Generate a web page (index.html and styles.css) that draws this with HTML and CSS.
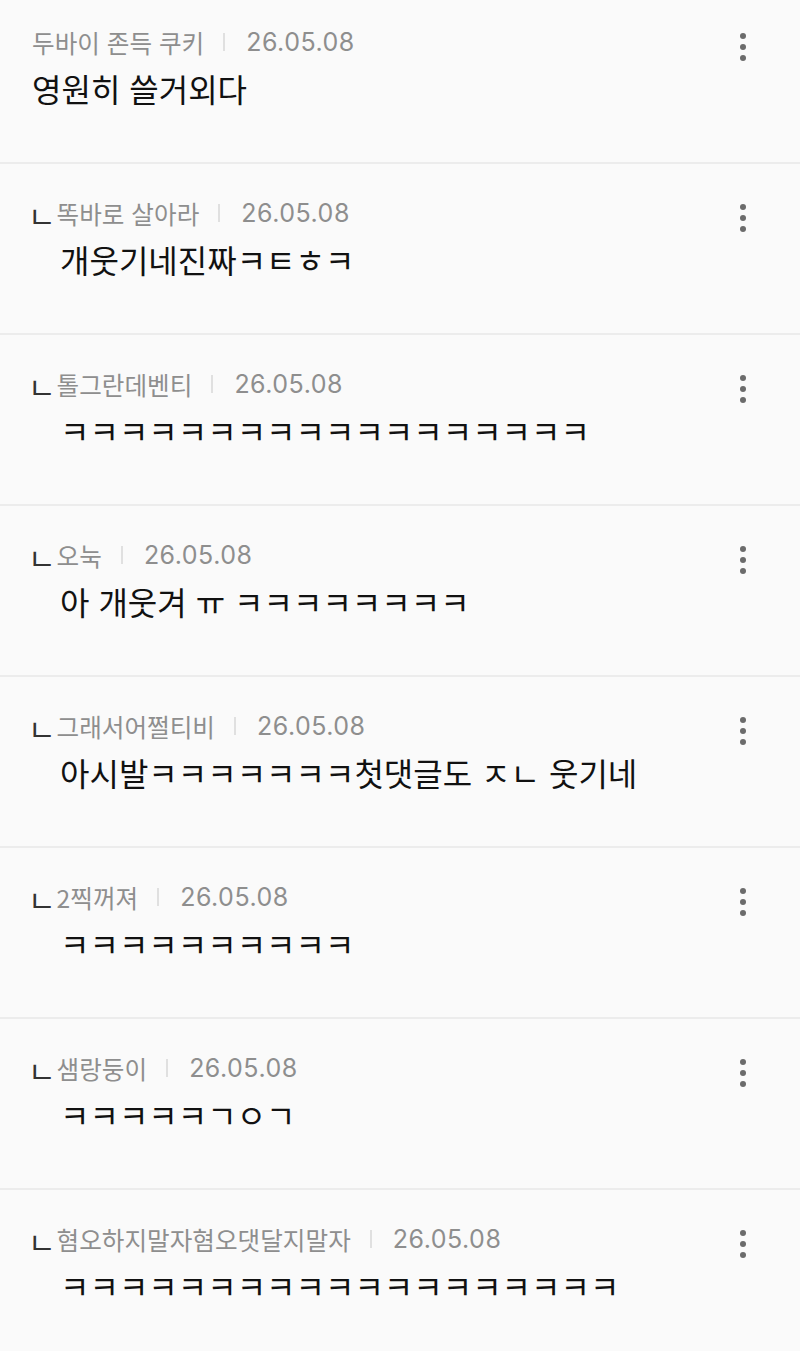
FILE: index.html
```html
<!DOCTYPE html>
<html lang="ko">
<head>
    <meta charset="UTF-8">
    <meta name="viewport" content="width=device-width, initial-scale=1.0">
    <title>댓글</title>
    <link rel="stylesheet" href="styles.css">
</head>
<body>
    <div class="comment-list">
        <div class="comment first">
            <div class="comment-head">
                <div class="meta">
                    <span class="name">두바이 존득 쿠키</span>
                    <span class="sep"></span>
                    <span class="date">26.05.08</span>
                </div>
                <button class="more" aria-label="더보기">
                    <svg width="24" height="28" viewBox="0 0 24 28"><circle cx="12" cy="3" r="3"/><circle cx="12" cy="14" r="3"/><circle cx="12" cy="25" r="3"/></svg>
                </button>
            </div>
            <p class="text">영원히 쓸거외다</p>
        </div>

        <div class="comment reply">
            <div class="comment-head">
                <div class="meta">
                    <span class="reply-mark">ㄴ</span>
                    <span class="name">똑바로 살아라</span>
                    <span class="sep"></span>
                    <span class="date">26.05.08</span>
                </div>
                <button class="more" aria-label="더보기">
                    <svg width="24" height="28" viewBox="0 0 24 28"><circle cx="12" cy="3" r="3"/><circle cx="12" cy="14" r="3"/><circle cx="12" cy="25" r="3"/></svg>
                </button>
            </div>
            <p class="text">개웃기네진짜ㅋㅌㅎㅋ</p>
        </div>

        <div class="comment reply">
            <div class="comment-head">
                <div class="meta">
                    <span class="reply-mark">ㄴ</span>
                    <span class="name">톨그란데벤티</span>
                    <span class="sep"></span>
                    <span class="date">26.05.08</span>
                </div>
                <button class="more" aria-label="더보기">
                    <svg width="24" height="28" viewBox="0 0 24 28"><circle cx="12" cy="3" r="3"/><circle cx="12" cy="14" r="3"/><circle cx="12" cy="25" r="3"/></svg>
                </button>
            </div>
            <p class="text">ㅋㅋㅋㅋㅋㅋㅋㅋㅋㅋㅋㅋㅋㅋㅋㅋㅋㅋ</p>
        </div>

        <div class="comment reply">
            <div class="comment-head">
                <div class="meta">
                    <span class="reply-mark">ㄴ</span>
                    <span class="name">오눅</span>
                    <span class="sep"></span>
                    <span class="date">26.05.08</span>
                </div>
                <button class="more" aria-label="더보기">
                    <svg width="24" height="28" viewBox="0 0 24 28"><circle cx="12" cy="3" r="3"/><circle cx="12" cy="14" r="3"/><circle cx="12" cy="25" r="3"/></svg>
                </button>
            </div>
            <p class="text">아 개웃겨 ㅠ ㅋㅋㅋㅋㅋㅋㅋㅋ</p>
        </div>

        <div class="comment reply">
            <div class="comment-head">
                <div class="meta">
                    <span class="reply-mark">ㄴ</span>
                    <span class="name">그래서어쩔티비</span>
                    <span class="sep"></span>
                    <span class="date">26.05.08</span>
                </div>
                <button class="more" aria-label="더보기">
                    <svg width="24" height="28" viewBox="0 0 24 28"><circle cx="12" cy="3" r="3"/><circle cx="12" cy="14" r="3"/><circle cx="12" cy="25" r="3"/></svg>
                </button>
            </div>
            <p class="text">아시발ㅋㅋㅋㅋㅋㅋㅋ첫댓글도 ㅈㄴ 웃기네</p>
        </div>

        <div class="comment reply">
            <div class="comment-head">
                <div class="meta">
                    <span class="reply-mark">ㄴ</span>
                    <span class="name">2찍꺼져</span>
                    <span class="sep"></span>
                    <span class="date">26.05.08</span>
                </div>
                <button class="more" aria-label="더보기">
                    <svg width="24" height="28" viewBox="0 0 24 28"><circle cx="12" cy="3" r="3"/><circle cx="12" cy="14" r="3"/><circle cx="12" cy="25" r="3"/></svg>
                </button>
            </div>
            <p class="text">ㅋㅋㅋㅋㅋㅋㅋㅋㅋㅋ</p>
        </div>

        <div class="comment reply">
            <div class="comment-head">
                <div class="meta">
                    <span class="reply-mark">ㄴ</span>
                    <span class="name">샘랑둥이</span>
                    <span class="sep"></span>
                    <span class="date">26.05.08</span>
                </div>
                <button class="more" aria-label="더보기">
                    <svg width="24" height="28" viewBox="0 0 24 28"><circle cx="12" cy="3" r="3"/><circle cx="12" cy="14" r="3"/><circle cx="12" cy="25" r="3"/></svg>
                </button>
            </div>
            <p class="text">ㅋㅋㅋㅋㅋㄱㅇㄱ</p>
        </div>

        <div class="comment reply">
            <div class="comment-head">
                <div class="meta">
                    <span class="reply-mark">ㄴ</span>
                    <span class="name">혐오하지말자혐오댓달지말자</span>
                    <span class="sep"></span>
                    <span class="date">26.05.08</span>
                </div>
                <button class="more" aria-label="더보기">
                    <svg width="24" height="28" viewBox="0 0 24 28"><circle cx="12" cy="3" r="3"/><circle cx="12" cy="14" r="3"/><circle cx="12" cy="25" r="3"/></svg>
                </button>
            </div>
            <p class="text">ㅋㅋㅋㅋㅋㅋㅋㅋㅋㅋㅋㅋㅋㅋㅋㅋㅋㅋㅋ</p>
        </div>
    </div>
</body>
</html>
```

FILE: styles.css
```css
body {
    margin: 0;
    background-color: #fafafa;
    font-family: "Noto Sans CJK KR", "Noto Sans", sans-serif;
    color: #111;
}

.comment-list {
    display: flex;
    flex-direction: column;
}

/* each row is 171px including the divider */
.comment {
    box-sizing: border-box;
    height: 171px;
    padding: 32px 45px 0 32px;
    border-bottom: 2px solid #ececec;
}

/* the first row is cut off at the top of the screen */
.comment.first {
    height: 164px;
    padding-top: 25px;
}

.comment-head {
    display: flex;
    justify-content: space-between;
    align-items: flex-start;
}

.meta {
    display: flex;
    align-items: center;
    height: 34px;
    color: #8e8e8e;
    font-size: 24.6px;
}

.reply-mark {
    color: #333;
    font-size: 30px;
    line-height: 34px;
    margin: 4px 1px 0 -4px;
}

.name {
    white-space: nowrap;
}

.sep {
    width: 2px;
    height: 18px;
    background-color: #e0e0e0;
    margin: 0 21px 0 19px;
}

.date {
    font-family: Inter, "Noto Sans", sans-serif;
    font-size: 25px;
    letter-spacing: 0.5px;
}

.more {
    border: none;
    background: none;
    padding: 0;
    margin-top: 8px;
    fill: #6b6b6b;
    cursor: pointer;
}

.text {
    margin: 4px 0 0;
    font-size: 32px;
    line-height: 40px;
    white-space: nowrap;
}

.reply .text {
    margin-left: 28px;
}
```
